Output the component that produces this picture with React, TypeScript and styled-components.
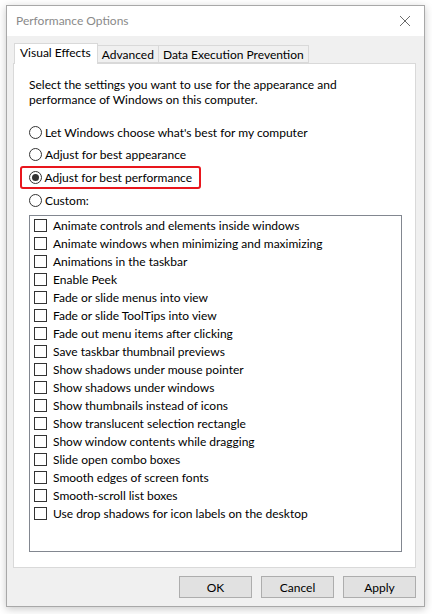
import React from 'react'
import styled, { createGlobalStyle } from 'styled-components'

const GlobalStyle = createGlobalStyle`
  html, body {
    margin: 0;
    padding: 0;
    background: #ffffff;
  }
  body {
    font-family: Lato, "Noto Sans", sans-serif;
    font-size: 12px;
    color: #000;
  }
`

const radios = [
  { label: "Let Windows choose what's best for my computer", checked: false },
  { label: 'Adjust for best appearance', checked: false },
  { label: 'Adjust for best performance', checked: true, highlight: true },
  { label: 'Custom:', checked: false },
]

const effects = [
  'Animate controls and elements inside windows',
  'Animate windows when minimizing and maximizing',
  'Animations in the taskbar',
  'Enable Peek',
  'Fade or slide menus into view',
  'Fade or slide ToolTips into view',
  'Fade out menu items after clicking',
  'Save taskbar thumbnail previews',
  'Show shadows under mouse pointer',
  'Show shadows under windows',
  'Show thumbnails instead of icons',
  'Show translucent selection rectangle',
  'Show window contents while dragging',
  'Slide open combo boxes',
  'Smooth edges of screen fonts',
  'Smooth-scroll list boxes',
  'Use drop shadows for icon labels on the desktop',
]

const tabs = ['Visual Effects', 'Advanced', 'Data Execution Prevention']

const App = () => {
  return (
    <>
      <GlobalStyle />
      <Page>
        <Window>
          <TitleBar>
            <Title>Performance Options</Title>
            <CloseIcon width="12" height="12" viewBox="0 0 12 12">
              <path d="M1 1 L11 11 M11 1 L1 11" stroke="#6b6b6b" strokeWidth="1" fill="none" />
            </CloseIcon>
          </TitleBar>

          <Body>
            <TabRow>
              {tabs.map((t, i) => (
                <Tab key={t} $active={i === 0}>{t}</Tab>
              ))}
            </TabRow>

            <Panel>
              <Intro>
                Select the settings you want to use for the appearance and
                <br />
                performance of Windows on this computer.
              </Intro>

              <RadioGroup>
                {radios.map((r) => (
                  <RadioRow key={r.label} $highlight={!!r.highlight}>
                    <Radio $checked={r.checked} />
                    <span>{r.label}</span>
                  </RadioRow>
                ))}
              </RadioGroup>

              <ListBox>
                {effects.map((e) => (
                  <CheckRow key={e}>
                    <Check />
                    <span>{e}</span>
                  </CheckRow>
                ))}
              </ListBox>
            </Panel>

            <ButtonBar>
              <Button>OK</Button>
              <Button>Cancel</Button>
              <Button>Apply</Button>
            </ButtonBar>
          </Body>
        </Window>
      </Page>
    </>
  )
}

export default App

const Page = styled.div`
  width: 432px;
  height: 614px;
  padding: 5px 0 0 6px;
  box-sizing: border-box;
`

const Window = styled.div`
  width: 419px;
  height: 602px;
  box-sizing: border-box;
  border: 1px solid #a8a8a8;
  background: #f0f0f0;
  box-shadow: 0 2px 8px rgba(0, 0, 0, 0.22);
  display: flex;
  flex-direction: column;
`

const TitleBar = styled.div`
  height: 30px;
  background: #ffffff;
  display: flex;
  align-items: center;
  justify-content: space-between;
  padding: 0 9px 0 9px;
`

const Title = styled.div`
  color: #8a8a8a;
  font-size: 12px;
  padding-bottom: 1px;
`

const CloseIcon = styled.svg`
  display: block;
  margin-right: 4px;
  margin-top: -1px;
`

const Body = styled.div`
  flex: 1;
  display: flex;
  flex-direction: column;
  padding: 6px 8px 0 6px;
`

const TabRow = styled.div`
  display: flex;
  align-items: flex-end;
  height: 21px;
  padding-left: 1px;
  position: relative;
  z-index: 1;
`

const Tab = styled.div<{ $active: boolean }>`
  box-sizing: border-box;
  height: ${(p) => (p.$active ? '21px' : '18px')};
  margin-bottom: ${(p) => (p.$active ? '-1px' : '0')};
  padding: ${(p) => (p.$active ? '0 6px 3px 5px' : '0 4px 0 4px')};
  background: ${(p) => (p.$active ? '#ffffff' : '#f0f0f0')};
  border: 1px solid #d9d9d9;
  border-bottom: ${(p) => (p.$active ? 'none' : '1px solid #d9d9d9')};
  border-left: ${(p) => (p.$active ? '1px solid #d9d9d9' : 'none')};
  display: flex;
  align-items: center;
  white-space: nowrap;
  &:first-child {
    border-left: 1px solid #d9d9d9;
  }
`

const Panel = styled.div`
  box-sizing: border-box;
  height: 505px;
  background: #ffffff;
  border: 1px solid #d9d9d9;
  padding: 13px 13px 15px 15px;
  display: flex;
  flex-direction: column;
`

const Intro = styled.div`
  line-height: 15px;
`

const RadioGroup = styled.div`
  display: flex;
  flex-direction: column;
  align-items: flex-start;
  margin-top: 14px;
  margin-bottom: 4px;
`

const RadioRow = styled.div<{ $highlight: boolean }>`
  display: inline-flex;
  align-items: center;
  gap: 3px;
  height: 22.6px;
  box-sizing: border-box;
  white-space: nowrap;
  margin-left: ${(p) => (p.$highlight ? '-9px' : '0')};
  padding: ${(p) => (p.$highlight ? '0 7px 0 6.5px' : '0')};
  border: ${(p) => (p.$highlight ? '2.5px solid #e8161d' : 'none')};
  border-radius: 3px;
`

const Radio = styled.span<{ $checked: boolean }>`
  width: 13px;
  height: 13px;
  box-sizing: border-box;
  border-radius: 50%;
  border: 1px solid #333333;
  background: #ffffff;
  display: flex;
  align-items: center;
  justify-content: center;
  flex-shrink: 0;
  &::after {
    content: '';
    display: ${(p) => (p.$checked ? 'block' : 'none')};
    width: 7px;
    height: 7px;
    border-radius: 50%;
    background: #333333;
  }
`

const ListBox = styled.div`
  flex: 1;
  box-sizing: border-box;
  border: 1px solid #828790;
  background: #ffffff;
  padding: 0 0 0 4px;
  display: flex;
  flex-direction: column;
`

const CheckRow = styled.div`
  height: 18px;
  display: flex;
  align-items: center;
  gap: 6px;
  white-space: nowrap;
`

const Check = styled.span`
  width: 13px;
  height: 13px;
  box-sizing: border-box;
  border: 1px solid #333333;
  background: #ffffff;
  flex-shrink: 0;
`

const ButtonBar = styled.div`
  display: flex;
  justify-content: flex-end;
  gap: 9px;
  padding-top: 8px;
`

const Button = styled.button`
  width: 73px;
  height: 22px;
  box-sizing: border-box;
  background: #e1e1e1;
  border: 1px solid #adadad;
  font: inherit;
  font-size: 12px;
  color: #000;
  padding: 0;
`
